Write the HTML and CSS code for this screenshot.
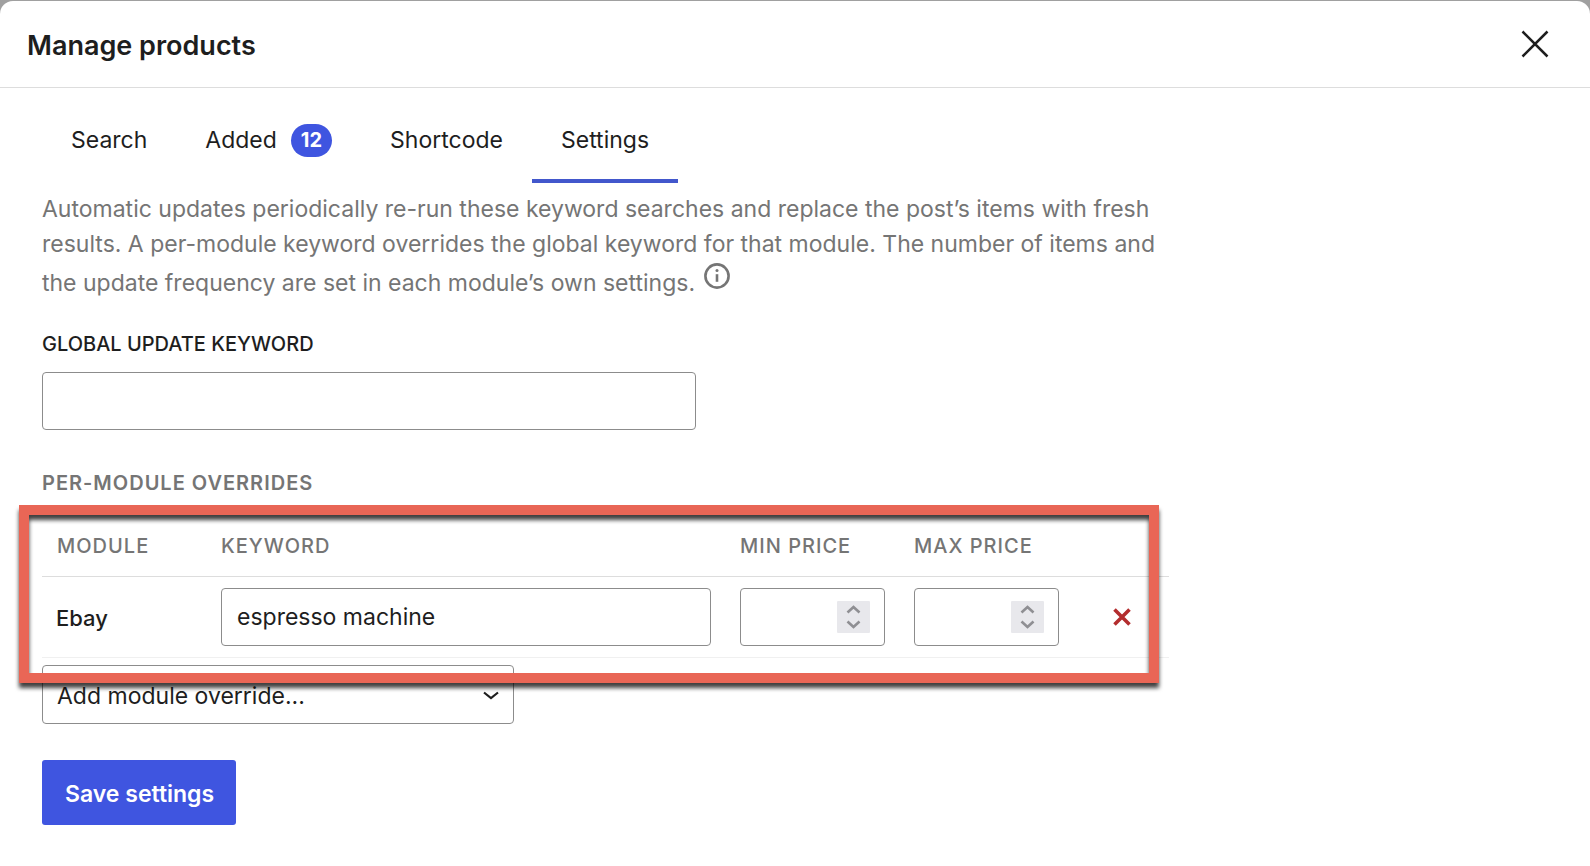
FILE: index.html
```html
<!DOCTYPE html>
<html lang="en">
<head>
<meta charset="utf-8">
<title>Manage products</title>
<link rel="stylesheet" href="styles.css">
</head>
<body>
<div class="modal" role="dialog" aria-labelledby="modal-title">
  <header class="modal-header">
    <h1 class="modal-title" id="modal-title">Manage products</h1>
    <button class="close" type="button" aria-label="Close">
      <svg width="28" height="28" viewBox="0 0 28 28" fill="none" stroke="currentColor" stroke-width="2.5"><path d="M1.5 1.5 26.5 26.5M26.5 1.5 1.5 26.5"/></svg>
    </button>
  </header>
  <main class="content">
    <nav class="tabs" role="tablist">
      <button class="tab" type="button" role="tab">Search</button>
      <button class="tab" type="button" role="tab">Added <span class="badge">12</span></button>
      <button class="tab" type="button" role="tab">Shortcode</button>
      <button class="tab tab-active" type="button" role="tab" aria-selected="true">Settings</button>
    </nav>
    <form class="settings">
      <p class="intro">Automatic updates periodically re-run these keyword searches and replace the post’s items with fresh results. A per-module keyword overrides the global keyword for that module. The number of items and the update frequency are set in each module’s own settings. <svg class="info" width="26" height="26" viewBox="0 0 26 26" fill="none" stroke="currentColor"><circle cx="13" cy="13" r="11.6" stroke-width="2.6"/><path d="M13 11.2v7.6" stroke-width="2.6"/><circle cx="13" cy="7.4" r="1.5" fill="currentColor" stroke="none"/></svg></p>
      <label class="label" for="global">Global update keyword</label>
      <input class="field global" id="global" type="text">
      <h2 class="label section">Per-module overrides</h2>
      <div class="overrides">
        <table class="table">
          <colgroup><col class="col-module"><col class="col-keyword"><col class="col-price"><col class="col-price"><col></colgroup>
          <thead>
            <tr><th scope="col">Module</th><th scope="col">Keyword</th><th scope="col">Min price</th><th scope="col">Max price</th><td></td></tr>
          </thead>
          <tbody>
            <tr>
              <th scope="row">Ebay</th>
              <td><input class="field" type="text" value="espresso machine" aria-label="Keyword"></td>
              <td><div class="number"><input class="field" type="number" aria-label="Min price"><svg class="spinner" width="33" height="32" viewBox="0 0 33 32"><rect width="33" height="32" rx="1" fill="#e8e8ec"/><path d="M10.500 11.500l6-5.500 6 5.500M10.500 20.500l6 5.500 6-5.500" fill="none" stroke="#8f8f93" stroke-width="2.6"/></svg></div></td>
              <td><div class="number"><input class="field" type="number" aria-label="Max price"><svg class="spinner" width="33" height="32" viewBox="0 0 33 32"><rect width="33" height="32" rx="1" fill="#e8e8ec"/><path d="M10.500 11.500l6-5.500 6 5.500M10.500 20.500l6 5.500 6-5.500" fill="none" stroke="#8f8f93" stroke-width="2.6"/></svg></div></td>
              <td><button class="remove" type="button" aria-label="Remove override"><svg width="18" height="18" viewBox="0 0 18 18" fill="none" stroke="currentColor" stroke-width="3.6"><path d="M1.500 1.500 16.500 16.500M16.500 1.500 1.500 16.500"/></svg></button></td>
            </tr>
          </tbody>
        </table>
        <div class="highlight"></div>
      </div>
      <div class="select-wrap">
        <select class="field select" aria-label="Add module override"><option>Add module override...</option></select>
        <svg class="chevron" width="16" height="10" viewBox="0 0 16 10" fill="none" stroke="currentColor" stroke-width="2.200"><path d="M1 1.500 8 7.200 15 1.500"/></svg>
      </div>
      <button class="save" type="submit">Save settings</button>
    </form>
  </main>
</div>
</body>
</html>
```
FILE: styles.css
```css
* {
  box-sizing: border-box;
}

body {
  margin: 0;
  padding-top: 1px;
  min-height: 100vh;
  display: flex;
  background: #a0a0a0;
  color: #1e1e1e;
  font: 23px/35px Inter, "Liberation Sans", sans-serif;
}

button,
input,
select {
  font: inherit;
  color: inherit;
}

button {
  padding: 0;
  border: 0;
  background: none;
}

.modal {
  flex: 1;
  min-width: 0;
  background: #fff;
  border-radius: 13px 13px 0 0;
}

.modal-header {
  display: flex;
  align-items: center;
  justify-content: space-between;
  height: 87px;
  padding: 0 41px 0 27px;
  border-bottom: 1px solid #ddd;
}

.modal-title {
  margin: 0;
  padding-top: 2px;
  font-size: 27px;
  font-weight: 600;
}

.close {
  display: flex;
}

.content {
  max-width: 1211px;
  padding: 9px 42px 40px;
}

.tabs {
  display: flex;
}

.tab {
  display: flex;
  align-items: center;
  gap: 14px;
  height: 86px;
  padding: 0 29px;
}

.tab-active {
  box-shadow: inset 0 -4px #4257cc;
}

.badge {
  padding: 0 10px;
  border-radius: 17px;
  background: #3f55e0;
  color: #fff;
  font-size: 20px;
  font-weight: 700;
  line-height: 33px;
}

.settings {
  display: flex;
  flex-direction: column;
  align-items: flex-start;
}

.intro {
  margin: 9px 0 25px;
  color: #757575;
}

.info {
  margin: 1px 0 0 2px;
  vertical-align: 2px;
}

.label {
  margin: 0 0 10px;
  font-size: 20px;
  font-weight: 500;
  line-height: 36px;
  text-transform: uppercase;
}

.section {
  margin: 35px 0 4px;
  color: #757575;
  font-weight: 600;
  letter-spacing: 1px;
}

.field {
  display: block;
  width: 100%;
  height: 58px;
  padding: 0 15px;
  border: 1px solid #8c8c8c;
  border-radius: 4px;
  background: #fff;
}

.global {
  max-width: 654px;
}

.overrides {
  position: relative;
  width: 100%;
}

.table {
  width: 100%;
  table-layout: fixed;
  border-collapse: collapse;
  text-align: left;
}

.col-module {
  width: 164px;
}

.col-keyword {
  width: 519px;
}

.col-price {
  width: 174px;
}

.table th,
.table td {
  padding: 0 14px 0 15px;
}

.table thead {
  color: #757575;
  font-size: 20px;
  letter-spacing: 1px;
  text-transform: uppercase;
}

.table thead th {
  height: 71px;
  padding-top: 12px;
  font-weight: 500;
}

.table thead tr {
  border-bottom: 1px solid #ddd;
}

.table tbody tr {
  height: 81px;
  border-bottom: 1px solid #f0f0f0;
}

.table tbody th {
  padding-top: 4px;
  padding-left: 14px;
  font-size: 22px;
  font-weight: 500;
}

.number {
  position: relative;
}

.number .field {
  appearance: textfield;
  padding-right: 50px;
}

.spinner {
  position: absolute;
  top: 13px;
  right: 15px;
}

.remove {
  display: flex;
  margin: 0 auto;
  color: #b32d2e;
}

.highlight {
  position: absolute;
  z-index: 1;
  inset: 0 10px -25px -23px;
  border: 10px solid #e96656;
  filter: drop-shadow(0 5px 2px rgba(0, 0, 0, 0.75));
  pointer-events: none;
}

.select-wrap {
  position: relative;
  width: 100%;
  max-width: 472px;
  margin: 7px 0 36px;
}

.select {
  appearance: none;
  height: 59px;
  padding: 4px 44px 0 14px;
}

.chevron {
  position: absolute;
  top: 26px;
  right: 15px;
  pointer-events: none;
}

.save {
  height: 65px;
  padding: 4px 22px 0 23px;
  border-radius: 3px;
  background: #3f55e0;
  color: #fff;
  font-weight: 600;
}
```
